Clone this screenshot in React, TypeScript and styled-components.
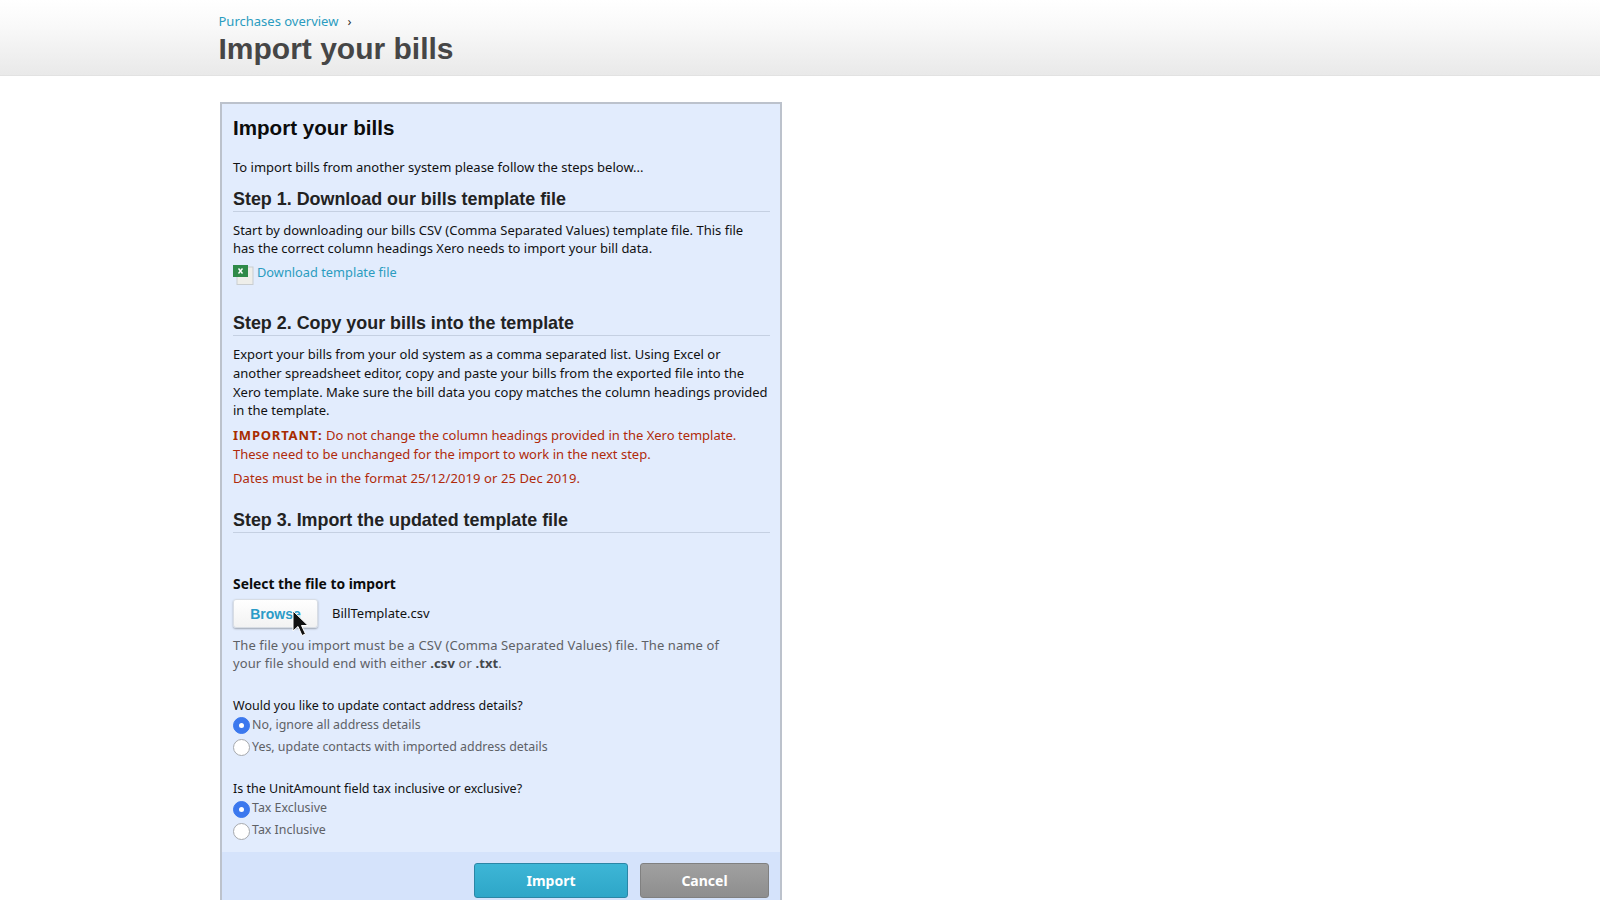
import styled, { createGlobalStyle } from "styled-components";

const GlobalStyle = createGlobalStyle`
  html, body {
    margin: 0;
    padding: 0;
    height: 900px;
    overflow: hidden;
    background: #fff;
    font-family: "Noto Sans", "Liberation Sans", sans-serif;
  }
`;

const Header = styled.header`
  height: 76px;
  box-sizing: border-box;
  padding: 13px 0 0 218.5px;
  background: linear-gradient(#ffffff 0%, #f9f9f9 35%, #e9e9e9 100%);
  border-bottom: 1px solid #e2e2e2;
`;

const Crumbs = styled.div`
  display: flex;
  align-items: center;
  gap: 9px;
  height: 16px;
  font-size: 13px;
  color: #2b9cc0;
`;

const Chevron = styled.span`
  color: #333;
  font-size: 13px;
`;

const PageTitle = styled.h1`
  margin: 3px 0 0;
  font: bold 30px/34px "Liberation Sans", Arial, sans-serif;
  color: #464646;
`;

const Panel = styled.main`
  width: 562px;
  height: 900px;
  box-sizing: border-box;
  margin: 26px 0 0 220px;
  background: #e2ecfd;
  border: 2px solid #bcc2cc;
  border-bottom: 0;
  display: flex;
  flex-direction: column;
`;

const Body = styled.div`
  padding: 0 10px 0 11px;
  height: 748px;
  box-sizing: border-box;
  font-size: 13px;
  line-height: 18.7px;
  color: #111;
`;

const PanelTitle = styled.h2`
  margin: 12px 0 0;
  font: bold 20.6px/24px "Liberation Sans", Arial, sans-serif;
  color: #0c0c0c;
`;

const Intro = styled.p`
  margin: 18px 0 0;
`;

const StepTitle = styled.h3<{ $top: number }>`
  margin: ${(p) => p.$top}px 0 0;
  font: bold 17.9px/20px "Liberation Sans", Arial, sans-serif;
  color: #222;
  border-bottom: 1px solid #c5d0e2;
  padding-bottom: 2px;
`;

const Para = styled.p<{ $top?: number }>`
  margin: ${(p) => p.$top ?? 9}px 0 0;
`;

const Warning = styled(Para)`
  color: #b02a0a;
  margin-right: 20px;
  strong {
    color: #a82c00;
    font-weight: 700;
    letter-spacing: 0.8px;
  }
`;

const DateNote = styled(Warning)`
  letter-spacing: 0.09px;
`;

const DownloadRow = styled.div`
  display: flex;
  align-items: center;
  gap: 3px;
  margin-top: 2px;
  height: 24px;
  font-size: 12.8px;
  color: #2b9cc0;
  svg {
    margin-top: 6px;
  }
`;

const FieldLabel = styled.div`
  margin-top: 42px;
  font-size: 13.85px;
  font-weight: 700;
  color: #0c0c0c;
`;

const FileRow = styled.div`
  display: flex;
  align-items: center;
  gap: 14px;
  margin-top: 5px;
  height: 30px;
`;

const BrowseButton = styled.button`
  position: relative;
  width: 85px;
  height: 29px;
  padding: 0;
  border: 1px solid #d8dde4;
  border-radius: 3px;
  background: linear-gradient(#ffffff, #f2f2f2);
  box-shadow: 0 1px 2px rgba(0, 0, 0, 0.3);
  color: #2b9cc8;
  font: bold 14px "Liberation Sans", Arial, sans-serif;
`;

const Cursor = styled.svg`
  position: absolute;
  left: 58px;
  top: 10px;
  width: 17px;
  height: 27px;
`;

const Help = styled.p`
  margin: 7px 30px 0 0;
  color: #5e6166;
  letter-spacing: 0.1px;
  strong {
    color: #44474b;
  }
`;

const Question = styled.div<{ $top: number }>`
  margin-top: ${(p) => p.$top}px;
  font-size: 12.5px;
`;

const RadioRow = styled.div`
  display: flex;
  align-items: center;
  height: 22px;
  font-size: 12.4px;
  color: #5e6166;
`;

const Radio = styled.span<{ $on?: boolean }>`
  width: 17px;
  height: 17px;
  margin-right: 2px;
  flex: none;
  box-sizing: border-box;
  border-radius: 50%;
  display: flex;
  align-items: center;
  justify-content: center;
  margin-top: 1px;
  background: ${(p) => (p.$on ? "#3b78ee" : "#fff")};
  border: 1px solid ${(p) => (p.$on ? "#3b78ee" : "#a6a9ad")};
  &::after {
    content: "";
    display: ${(p) => (p.$on ? "block" : "none")};
    width: 5px;
    height: 5px;
    border-radius: 50%;
    background: #fff;
  }
`;

const RadioGroup = styled.div`
  margin-top: -1.5px;
`;

const Footer = styled.div`
  display: flex;
  justify-content: flex-end;
  gap: 12px;
  padding: 11px 11px 0 0;
  flex: 1;
  background: #d5e3fb;
`;

const ActionButton = styled.button<{ $primary?: boolean }>`
  height: 35px;
  width: ${(p) => (p.$primary ? 154 : 129)}px;
  border-radius: 3px;
  border: 1px solid ${(p) => (p.$primary ? "#2b86a6" : "#808080")};
  background: ${(p) =>
    p.$primary
      ? "linear-gradient(#3db6d6, #2ea6c8)"
      : "linear-gradient(#a0a0a0, #8e8e8e)"};
  color: #fff;
  font: bold 14px "Noto Sans", "Liberation Sans", sans-serif;
`;

function SheetIcon() {
  return (
    <svg width="21" height="20" viewBox="0 0 21 20">
      <rect x="4" y="2" width="16" height="17.5" fill="#eeeeea" stroke="#c9cdd0" />
      <rect x="0" y="0" width="15" height="12" fill="#2f8a49" />
      <path d="M5.5 3.5l4 5M9.5 3.5l-4 5" stroke="#fff" strokeWidth="1.4" />
    </svg>
  );
}

export default function App() {
  return (
    <>
      <GlobalStyle />
      <Header>
        <Crumbs>
          Purchases overview <Chevron>›</Chevron>
        </Crumbs>
        <PageTitle>Import your bills</PageTitle>
      </Header>
      <Panel>
        <Body>
          <PanelTitle>Import your bills</PanelTitle>
          <Intro>To import bills from another system please follow the steps below...</Intro>
          <StepTitle $top={12}>Step 1. Download our bills template file</StepTitle>
          <Para>
            Start by downloading our bills CSV (Comma Separated Values) template file. This file
            <br />
            has the correct column headings Xero needs to import your bill data.
          </Para>
          <DownloadRow>
            <SheetIcon />
            Download template file
          </DownloadRow>
          <StepTitle $top={29}>Step 2. Copy your bills into the template</StepTitle>
          <Para>
            Export your bills from your old system as a comma separated list. Using Excel or
            another spreadsheet editor, copy and paste your bills from the exported file into the
            Xero template. Make sure the bill data you copy matches the column headings provided
            in the template.
          </Para>
          <Warning $top={6}>
            <strong>IMPORTANT:</strong> Do not change the column headings provided in the Xero
            template. These need to be unchanged for the import to work in the next step.
          </Warning>
          <DateNote $top={6}>Dates must be in the format 25/12/2019 or 25 Dec 2019.</DateNote>
          <StepTitle $top={22}>Step 3. Import the updated template file</StepTitle>
          <FieldLabel>Select the file to import</FieldLabel>
          <FileRow>
            <BrowseButton>
              Browse
              <Cursor viewBox="0 0 17 27">
                <path
                  d="M1 1v20l5-4.5 4 9 3.5-1.5-4-8.5h6.5z"
                  fill="#111"
                  stroke="#fff"
                  strokeWidth="1"
                />
              </Cursor>
            </BrowseButton>
            BillTemplate.csv
          </FileRow>
          <Help>
            The file you import must be a CSV (Comma Separated Values) file. The name of your file
            should end with either <strong>.csv</strong> or <strong>.txt</strong>.
          </Help>
          <Question $top={24}>Would you like to update contact address details?</Question>
          <RadioGroup>
            <RadioRow>
              <Radio $on />
              No, ignore all address details
            </RadioRow>
            <RadioRow>
              <Radio />
              Yes, update contacts with imported address details
            </RadioRow>
          </RadioGroup>
          <Question $top={22}>Is the UnitAmount field tax inclusive or exclusive?</Question>
          <RadioGroup>
            <RadioRow>
              <Radio $on />
              Tax Exclusive
            </RadioRow>
            <RadioRow>
              <Radio />
              Tax Inclusive
            </RadioRow>
          </RadioGroup>
        </Body>
        <Footer>
          <ActionButton $primary>Import</ActionButton>
          <ActionButton>Cancel</ActionButton>
        </Footer>
      </Panel>
    </>
  );
}
